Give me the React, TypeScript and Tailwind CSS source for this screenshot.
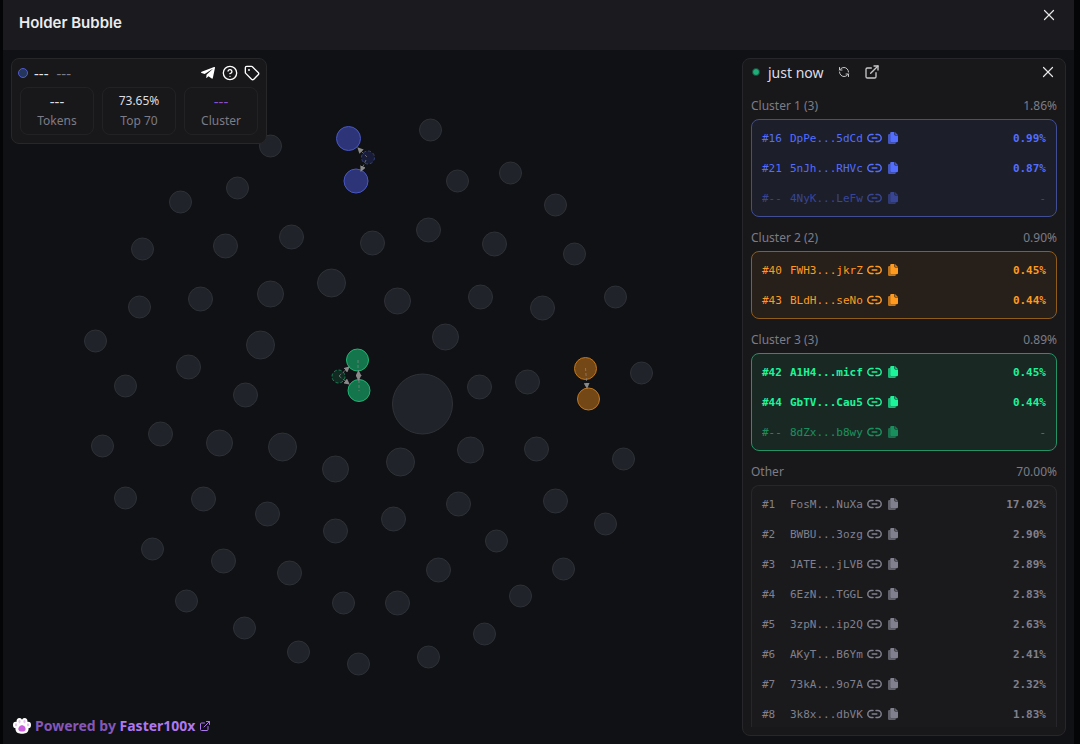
import { CircleHelp, ExternalLink, RefreshCcw, Tag, X } from "lucide-react";
import { FaTelegramPlane } from "react-icons/fa";

type Bubble = [x: number, y: number, r: number];

const bubbles: Bubble[] = [
  [422, 354, 30], [270, 96, 11], [430, 80, 11], [180, 152, 11], [237, 138, 11],
  [457, 131, 11], [510, 123, 11], [555, 155, 11], [142, 199, 11], [225, 196, 12],
  [291, 187, 12], [372, 193, 12], [428, 180, 12], [494, 194, 12], [574, 204, 11],
  [331, 233, 14], [270, 244, 13], [200, 249, 12], [139, 257, 11], [397, 251, 13],
  [480, 247, 12], [542, 258, 12], [615, 247, 11], [95, 291, 11], [260, 295, 14],
  [445, 287, 13], [188, 317, 12], [125, 336, 11], [245, 345, 12], [479, 337, 12],
  [527, 332, 12], [641, 323, 11], [160, 384, 12], [102, 396, 11], [219, 393, 13],
  [282, 397, 14], [335, 419, 13], [400, 412, 14], [470, 400, 13], [536, 399, 12],
  [623, 409, 11], [125, 448, 11], [203, 449, 12], [267, 464, 12], [335, 481, 12],
  [393, 469, 12], [458, 454, 12], [555, 451, 12], [605, 474, 11], [496, 491, 11],
  [152, 499, 11], [223, 511, 12], [289, 523, 12], [438, 520, 12], [563, 519, 11],
  [186, 551, 11], [343, 553, 11], [397, 553, 12], [520, 546, 11], [244, 578, 11],
  [484, 584, 11], [298, 602, 11], [358, 614, 11], [428, 607, 11],
];

type Holder = { rank: string; address: string; share: string; muted?: boolean };
type Group = {
  title: string;
  total: string;
  box: string;
  text: string;
  strong?: boolean;
  holders: Holder[];
};

const groups: Group[] = [
  {
    title: "Cluster 1 (3)",
    total: "1.86%",
    box: "border-[#414d95] bg-[#1c1e29] rounded-lg",
    text: "text-[#536dfe]",
    holders: [
      { rank: "#16", address: "DpPe...5dCd", share: "0.99%" },
      { rank: "#21", address: "5nJh...RHVc", share: "0.87%" },
      { rank: "#--", address: "4NyK...LeFw", share: "-", muted: true },
    ],
  },
  {
    title: "Cluster 2 (2)",
    total: "0.90%",
    box: "border-[#8f5c1c] bg-[#271f1a] rounded-lg",
    text: "text-[#ff9a1f]",
    holders: [
      { rank: "#40", address: "FWH3...jkrZ", share: "0.45%" },
      { rank: "#43", address: "BLdH...seNo", share: "0.44%" },
    ],
  },
  {
    title: "Cluster 3 (3)",
    total: "0.89%",
    box: "border-[#259265] bg-[#192823] rounded-lg",
    text: "text-[#1cf59a]",
    strong: true,
    holders: [
      { rank: "#42", address: "A1H4...micf", share: "0.45%" },
      { rank: "#44", address: "GbTV...Cau5", share: "0.44%" },
      { rank: "#--", address: "8dZx...b8wy", share: "-", muted: true },
    ],
  },
  {
    title: "Other",
    total: "70.00%",
    box: "border-[#27272b] bg-[#1a1a1c] rounded-t-lg border-b-0",
    text: "text-[#80808e]",
    holders: [
      { rank: "#1", address: "FosM...NuXa", share: "17.02%" },
      { rank: "#2", address: "BWBU...3ozg", share: "2.90%" },
      { rank: "#3", address: "JATE...jLVB", share: "2.89%" },
      { rank: "#4", address: "6EzN...TGGL", share: "2.83%" },
      { rank: "#5", address: "3zpN...ip2Q", share: "2.63%" },
      { rank: "#6", address: "AKyT...B6Ym", share: "2.41%" },
      { rank: "#7", address: "73kA...9o7A", share: "2.32%" },
      { rank: "#8", address: "3k8x...dbVK", share: "1.83%" },
    ],
  },
];

function LinkIcon() {
  return (
    <svg width="15" height="10" viewBox="0 0 15 10" fill="none" stroke="currentColor" strokeWidth="1.5" strokeLinecap="round" aria-hidden="true">
      <path d="M6 1.500H4.300A3.500 3.500 0 0 0 4.300 8.500H6M9 1.500H10.700A3.500 3.500 0 0 1 10.700 8.500H9M5.200 5H9.800" />
    </svg>
  );
}

function CopyIcon() {
  return (
    <svg width="10" height="12" viewBox="0 0 10 12" fill="currentColor" aria-hidden="true">
      <path opacity="0.7" d="M1.2 2H2.2V9.2Q2.2 10.2 3.2 10.2H7.8V10.9Q7.8 12 6.7 12H1.2Q0 12 0 10.8V3.2Q0 2 1.2 2Z" />
      <path d="M3.4 0H6.4V2.4Q6.4 3.5 7.5 3.5H10V9Q10 10.200 8.9 10.200H3.4Q2.2 10.200 2.2 9V1.200Q2.2 0 3.4 0Z" />
      <path opacity="0.8" d="M7.1 0L9.9 2.9H7.6Q7.1 2.9 7.1 2.3Z" />
    </svg>
  );
}

function PawIcon() {
  return (
    <svg width="18" height="18" viewBox="0 0 18 18" aria-hidden="true">
      <g fill="#fff">
        <ellipse cx="2.8" cy="8" rx="2.8" ry="3.3" />
        <ellipse cx="6.4" cy="4.600" rx="2.9" ry="3.7" />
        <ellipse cx="11.6" cy="4.600" rx="2.9" ry="3.7" />
        <ellipse cx="15.2" cy="8" rx="2.8" ry="3.3" />
        <path d="M9 4C13 5 16 9 15.5 12.5C15 16 12 16.800 9 16.800S3 16 2.5 12.5C2 9 5 5 9 4Z" />
      </g>
      <g fill="#e9c3f3">
        <ellipse cx="3" cy="7.8" rx="1.1" ry="1.6" />
        <ellipse cx="6.5" cy="4.600" rx="1.1" ry="1.8" />
        <ellipse cx="11.5" cy="4.600" rx="1.1" ry="1.8" />
        <ellipse cx="15" cy="7.8" rx="1.1" ry="1.6" />
      </g>
      <path fill="#ca5fe0" d="M9 8.200C11.300 8.200 13 10.6 12.600 12.600C12.200 14.400 10.800 14.600 9 14.600S5.800 14.400 5.400 12.600C5 10.600 6.700 8.200 9 8.200Z" />
    </svg>
  );
}

function BubbleMap() {
  return (
    <svg className="col-start-1 row-start-1 h-full w-full" role="img" aria-label="Holder bubble map">
      <defs>
        <marker id="arrow" viewBox="0 0 6 6" refX="5" refY="3" markerWidth="6" markerHeight="6" markerUnits="userSpaceOnUse" orient="auto-start-reverse">
          <path d="M0 0L6 3L0 6Z" fill="#8a8a8a" />
        </marker>
      </defs>
      <g fill="#202329" stroke="#2e3137" transform="translate(-2.500 0)">
        {bubbles.map(([x, y, r]) => (
          <circle key={`${x}-${y}`} cx={x} cy={y} r={r} />
        ))}
      </g>
      <g transform="translate(-3 0)">
        <g fill="#2d3578" stroke="#4857c4">
          <circle cx="348.500" cy="88.500" r="12" />
          <circle cx="356" cy="131" r="12" />
          <circle cx="368" cy="107.500" r="6.500" fill="#181c38" stroke="#34407f" strokeDasharray="3 2" />
        </g>
        <g fill="#14744b" stroke="#20b574">
          <circle cx="357.500" cy="310" r="11" />
          <circle cx="359" cy="340.500" r="11" />
          <circle cx="338.500" cy="326.500" r="6.500" fill="#122b22" stroke="#1c7c55" strokeDasharray="3 2" />
        </g>
        <g fill="#744717" stroke="#c07820">
          <circle cx="585.500" cy="318.500" r="11" />
          <circle cx="588.500" cy="349" r="11" />
        </g>
        <g stroke="#8a8a8a" strokeOpacity="0.7" strokeDasharray="3 2" fill="none">
          <path d="M367 107L358 98" markerEnd="url(#arrow)" />
          <path d="M366 110L361 121" markerEnd="url(#arrow)" />
          <path d="M339 326L349 317" markerEnd="url(#arrow)" />
          <path d="M339 326L349 334" markerEnd="url(#arrow)" />
          <path d="M358 310V321" />
          <path d="M358.500 321V330" strokeDasharray="none" markerStart="url(#arrow)" markerEnd="url(#arrow)" />
          <path d="M359 330V341" />
          <path d="M585.500 318L587 338" markerEnd="url(#arrow)" />
        </g>
      </g>
    </svg>
  );
}

function Stat({ value, label, tone }: { value: string; label: string; tone: string }) {
  return (
    <div className="flex h-12 w-[74px] flex-col items-center justify-center rounded-lg border border-[#222225] leading-5">
      <span className={tone}>{value}</span>
      <span className="text-[#7c7c88]">{label}</span>
    </div>
  );
}

function HolderRow({ holder, group }: { holder: Holder; group: Group }) {
  const weight = group.strong && !holder.muted ? "font-bold" : "";
  return (
    <li className={`flex h-[30px] items-center ${holder.muted ? "opacity-50" : ""}`}>
      <span className={`w-7 pt-[2px] ${weight}`}>{holder.rank}</span>
      <span className={`pt-[2px] ${weight}`}>{holder.address}</span>
      <a href="#holder" aria-label={`Open ${holder.address}`} className="ml-1">
        <LinkIcon />
      </a>
      <button type="button" aria-label={`Copy ${holder.address}`} className="ml-[6px]">
        <CopyIcon />
      </button>
      <span className={`ml-auto pt-[2px] ${holder.muted ? "" : "font-bold"}`}>{holder.share}</span>
    </li>
  );
}

export default function App() {
  return (
    <div className="flex h-screen bg-[#040506] pr-[6px] pl-[3px] font-['Noto_Sans',sans-serif] text-[12px]">
      <main className="flex min-w-0 flex-1 flex-col bg-[#101114]">
        <header className="flex h-[50px] shrink-0 items-center justify-between bg-[#1b1b1f] px-4">
          <h1 className="pb-1 font-['Inter',sans-serif] text-[15px] font-semibold text-[#ececef]">Holder Bubble</h1>
          <button type="button" aria-label="Close dialog" className="mb-5 text-[#e6e6e8]">
            <X size={18} strokeWidth={1.6} />
          </button>
        </header>

        <div className="grid min-h-0 flex-1 grid-cols-1 grid-rows-1">
          <BubbleMap />
          <div className="z-10 col-start-1 row-start-1 flex min-h-0 justify-between p-2">
            <div className="flex flex-col items-start justify-between">
              <section aria-label="Token summary" className="rounded-lg border border-[#27272a] bg-[#18181a] pb-2">
                <div className="flex h-7 items-center px-[6px]">
                  <span className="h-[10px] w-[10px] rounded-full border border-[#4f5bd0] bg-[#24365c]" />
                  <span className="ml-[6px] text-[15px] text-[#e6e6e8]">---</span>
                  <span className="ml-2 text-[15px] text-[#7c7c88]">---</span>
                  <div className="ml-auto flex items-center gap-[6px] text-white">
                    <a href="#telegram" aria-label="Telegram"><FaTelegramPlane size={16} /></a>
                    <button type="button" aria-label="Help"><CircleHelp size={16} /></button>
                    <button type="button" aria-label="Labels"><Tag size={16} /></button>
                  </div>
                </div>
                <div className="flex gap-2 px-2">
                  <Stat value="---" label="Tokens" tone="text-[15px] text-[#dedee2]" />
                  <Stat value="73.65%" label="Top 70" tone="text-[#dedee2]" />
                  <Stat value="---" label="Cluster" tone="text-[15px] text-[#8b50c8]" />
                </div>
              </section>
              <a href="#faster100x" className="flex items-center gap-1 px-[2px] text-[14px] leading-5 font-bold text-[#8457b8]">
                <PawIcon />
                <span>
                  Powered by <span className="text-[#ad78f0]">Faster100x</span>
                </span>
                <ExternalLink size={12} className="text-[#ad78f0]" />
              </a>
            </div>

            <aside className="flex w-[324px] flex-col rounded-lg border border-[#27272b] bg-[#18181a] px-2 pb-2">
              <div className="flex h-[26px] shrink-0 items-center">
                <span className="ml-[1px] h-2 w-2 rounded-full border border-[#164b39] bg-[#1fae78]" />
                <span className="ml-2 text-[14px] text-[#dedee2]">just now</span>
                <button type="button" aria-label="Refresh" className="ml-[14px] text-[#c6c6ca]"><RefreshCcw size={12} /></button>
                <a href="#bubble-map" aria-label="Open in new tab" className="ml-[14px] text-[#c6c6ca]"><ExternalLink size={16} /></a>
                <button type="button" aria-label="Close panel" className="ml-auto text-[#e6e6e8]"><X size={18} strokeWidth={1.6} /></button>
              </div>
              <div className="mt-[10px] flex min-h-0 flex-1 flex-col gap-[10px] overflow-hidden">
                {groups.map((group) => (
                  <section key={group.title} className="shrink-0">
                    <h2 className="mb-1 flex h-5 items-center justify-between pt-[2px] text-[#7c7c88]">
                      <span>{group.title}</span>
                      <span>{group.total}</span>
                    </h2>
                    <ul className={`border px-[10px] py-[3px] font-['DejaVu_Sans_Mono',monospace] text-[11px] ${group.box} ${group.text}`}>
                      {group.holders.map((holder) => (
                        <HolderRow key={holder.address} holder={holder} group={group} />
                      ))}
                    </ul>
                  </section>
                ))}
              </div>
            </aside>
          </div>
        </div>
      </main>
    </div>
  );
}
